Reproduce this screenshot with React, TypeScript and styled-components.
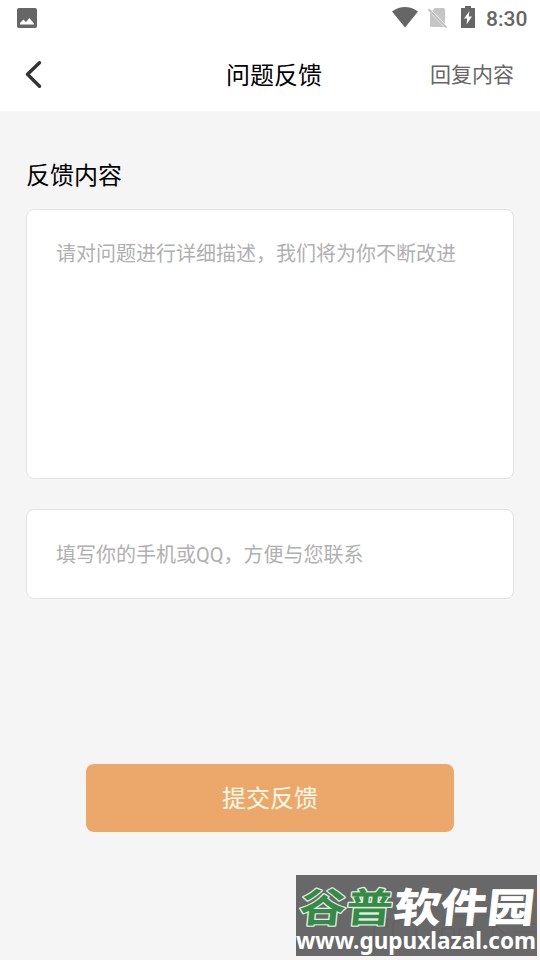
import React from 'react';
import styled, { createGlobalStyle } from 'styled-components';

const GlobalStyle = createGlobalStyle`
  *, *::before, *::after { box-sizing: border-box; }
  html, body { margin: 0; padding: 0; background: #f5f5f5; }
  body, button, input, textarea {
    font-family: Roboto, "Noto Sans CJK SC", sans-serif;
  }
`;

const Screen = styled.div`
  position: relative;
  display: flex;
  flex-direction: column;
  width: 540px;
  height: 960px;
  overflow: hidden;
  background: #f5f5f5;
`;

const StatusBar = styled.div`
  display: flex;
  align-items: center;
  justify-content: space-between;
  height: 36px;
  padding: 0 12px 0 17px;
  background: #fff;
  color: #666;
`;

const StatusGroup = styled.div`
  display: flex;
  align-items: flex-start;
  height: 36px;
`;

const StatusIcon = styled.svg<{ $gap?: number; $top?: number }>`
  display: block;
  flex: none;
  margin-top: ${({ $top = 0 }) => $top}px;
  margin-right: ${({ $gap = 0 }) => $gap}px;
`;

const Clock = styled.span`
  font: 500 21px/36px Roboto, sans-serif;
  width: 42px;
  white-space: nowrap;
  padding-top: 1px;
`;

const Header = styled.header`
  display: grid;
  grid-template-columns: 118px 1fr 110px;
  align-items: center;
  height: 75px;
  padding: 0 26px 0 22px;
  background: #fff;
`;

const BackButton = styled.button`
  display: flex;
  width: 26px;
  height: 32px;
  padding: 0;
  border: 0;
  background: none;
`;

const Title = styled.h1`
  margin: 0;
  padding: 4px 0 0 4px;
  font-size: 24px;
  font-weight: 400;
  line-height: 36px;
  text-align: center;
  color: #000;
`;

const HeaderLink = styled.button`
  padding: 3px 0 0;
  border: 0;
  background: none;
  font-size: 21px;
  line-height: 32px;
  text-align: right;
  white-space: nowrap;
  color: #666;
`;

const Form = styled.form`
  display: flex;
  flex-direction: column;
  padding: 47px 26px 0;
`;

const Label = styled.label`
  margin-bottom: 15px;
  font-size: 24px;
  line-height: 36px;
  color: #000;
`;

const fieldStyles = `
  display: block;
  width: 100%;
  border: 1px solid #e3e3e3;
  border-radius: 8px;
  outline: 0;
  background: #fff;
  font-size: 20px;
  line-height: 30px;
  color: #333;
  &::placeholder { color: #b0b0b0; opacity: 1; }
`;

const MessageField = styled.textarea`
  ${fieldStyles}
  height: 270px;
  margin-bottom: 30px;
  padding: 29px 29px;
  resize: none;
`;

const ContactField = styled.input`
  ${fieldStyles}
  height: 90px;
  padding: 2px 29px 0;
`;

const SubmitButton = styled.button`
  width: 368px;
  height: 68px;
  margin: 165px auto 0;
  padding: 2px 0 0;
  border: 0;
  border-radius: 8px;
  background: #eca86b;
  font-size: 24px;
  line-height: 36px;
  color: #fffbea;
`;

const Watermark = styled.svg`
  position: absolute;
  left: 295px;
  top: 874px;
`;

const BrandText = styled.text`
  font-family: "Noto Sans CJK SC", sans-serif;
  font-weight: 700;
  font-size: 40px;
`;

const SiteText = styled.text`
  font-family: "Noto Sans", sans-serif;
  font-weight: 700;
  font-size: 23px;
`;

export default function App() {
  return (
    <Screen>
      <GlobalStyle />
      <StatusBar>
        <StatusIcon width="20" height="20" viewBox="0 0 20 20">
          <rect width="20" height="20" rx="2" fill="#666" />
          <path d="M3 16.5V15l3.5-3.5 2.4 2.8L12.4 10l4.6 5.5v1Z" fill="#fff" />
        </StatusIcon>
        <StatusGroup>
          <StatusIcon $top={7} $gap={10} width="26" height="21" viewBox="0 0 26 21">
            <path d="M0 4.5Q13-4.3 26 4.5L13 20.5Z" fill="#666" />
          </StatusIcon>
          <StatusIcon $top={8} $gap={13} width="20" height="21" viewBox="0 0 20 21">
            <path d="M7 0h8.5Q17 0 17 1.5V16L4.2 2.8ZM2 4.5 16 19H3.5Q2 19 2 17.5Z" fill="#c5c5c5" />
            <path d="M.5 1.2 18.5 19.7" fill="none" stroke="#bbb" strokeWidth="1.8" />
          </StatusIcon>
          <StatusIcon $top={6} $gap={11} width="14" height="22" viewBox="0 0 14 22">
            <path d="M4 0h6v2h3.5q.5 0 .5.5v19q0 .5-.5.5H.5Q0 22 0 21.5V2.5Q0 2 .5 2H4Z" fill="#666" />
            <path d="M8.5 5 3 12.5h3.2L5.5 18.500 11 10.5H7.7Z" fill="#fff" />
          </StatusIcon>
          <Clock>8:30</Clock>
        </StatusGroup>
      </StatusBar>

      <Header>
        <BackButton type="button" aria-label="返回">
          <svg width="26" height="32" viewBox="0 0 26 32">
            <path d="M17.5 4.8 5.5 16.3l12 12" fill="none" stroke="#333" strokeWidth="3.4" strokeLinecap="round" strokeLinejoin="round" />
          </svg>
        </BackButton>
        <Title>问题反馈</Title>
        <HeaderLink type="button">回复内容</HeaderLink>
      </Header>

      <Form>
        <Label htmlFor="message">反馈内容</Label>
        <MessageField id="message" placeholder="请对问题进行详细描述，我们将为你不断改进" />
        <ContactField placeholder="填写你的手机或QQ，方便与您联系" />
        <SubmitButton type="button">提交反馈</SubmitButton>
      </Form>

      <Watermark width="245" height="86" viewBox="0 0 245 86">
        <rect x="1" y="1" width="241" height="81" fill="#686868" />
        <path
          d="M79 79V53h13v-9m6 35V52q0-7 8-7h7q8 0 8 7v12q0 7-8 7H98m51-20v-9h22v10m-24 3h12v16h-12Zm17 0h13v16h-13Zm22-14h26m-14 0v31m0-22 12 10m13-22v12h18m-23 8h24"
          fill="none"
          stroke="#606060"
          strokeWidth="1.2"
        />
        <g transform="translate(3 48) skewX(-6) scale(1.17 1)">
          <BrandText x="0" y="0" textLength="80" fill="#348b45" stroke="#e2eee3" strokeWidth="2.4" strokeLinejoin="round" paintOrder="stroke">谷普</BrandText>
          <BrandText x="81" y="0" textLength="120" fill="#fff" stroke="#fff" strokeWidth=".8">软件园</BrandText>
        </g>
        <SiteText x="1" y="75" textLength="240" lengthAdjust="spacingAndGlyphs" fill="#fff">www.gupuxlazal.com</SiteText>
      </Watermark>
    </Screen>
  );
}
